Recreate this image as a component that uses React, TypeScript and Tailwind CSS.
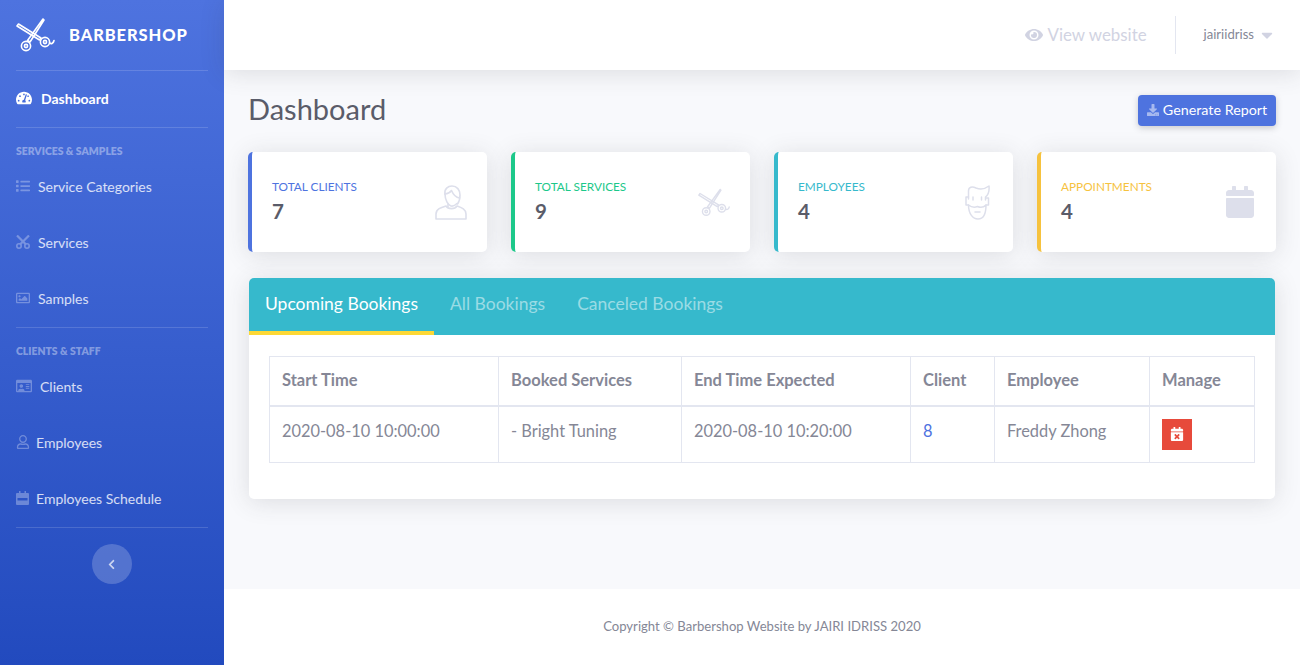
import { FaTachometerAlt, FaList, FaRegImage, FaRegIdCard, FaRegUser, FaChevronLeft, FaEye, FaCaretDown, FaDownload, FaCalendarTimes, FaCalendar } from "react-icons/fa";
import type { ReactNode } from "react";

const Scissors = ({ className, sw = 2 }: { className?: string; sw?: number }) => (
  <svg viewBox="0 0 39 34" className={className} fill="none" stroke="currentColor" strokeWidth={sw} strokeLinejoin="round" strokeLinecap="round">
    <path d="M1 8 L2.500 6 L25 20 L23.500 22 Z" />
    <path d="M27 1 L28 2 L14 24 L11.500 22.500 Z" />
    <circle cx="10" cy="28" r="4.600" />
    <circle cx="10" cy="28" r="1.600" />
    <circle cx="29" cy="24" r="4.600" />
    <circle cx="29" cy="24" r="1.600" />
    <path d="M33.600 25 C35.500 26.500 37.500 25 38 22.500" />
  </svg>
);

const SmallCut = () => (
  <svg viewBox="0 0 14 14" className="h-[14px] w-[14px]" fill="none" stroke="currentColor">
    <path d="M1 0.500 L10 9.500 M13 0.500 L4 9.500" strokeWidth="2.200" />
    <circle cx="3" cy="11" r="2.200" strokeWidth="1.600" />
    <circle cx="11" cy="11" r="2.200" strokeWidth="1.600" />
  </svg>
);

const SolidCalendar = () => (
  <svg viewBox="0 0 13 14" className="h-[14px] w-[13px]" fill="currentColor">
    <path fillRule="evenodd" d="M3 0 H4.500 V2 H8.500 V0 H10 V2 H12 A1 1 0 0 1 13 3 V13 A1 1 0 0 1 12 14 H1 A1 1 0 0 1 0 13 V3 A1 1 0 0 1 1 2 H3 Z M1.500 7 V9.500 H11.500 V7 Z" />
  </svg>
);

const ClientIcon = ({ className }: { className?: string }) => (
  <svg viewBox="0 0 32 35" className={className} fill="none" stroke="currentColor" strokeWidth="1.600" strokeLinecap="round" strokeLinejoin="round">
    <path d="M1 34 V29 C1 24 6 22.500 11 21 C13 24.500 20 24.500 22 21 C26 22.500 31 24 31 29 V34 Z" />
    <path d="M10 9 C9 4 13 1 17 1 C22 1 25 5 25 10 C25 14 24 17 22.500 19" />
    <path d="M10 9 C13 9 15 7.500 16.500 5.500 C18 9 20.500 12.500 24.500 13" />
    <path d="M10 9 C10 15 13 20 16 21 C18 21.500 20 20.500 22 18.500" />
    <path d="M13 19 L13 22" />
  </svg>
);

const BeardIcon = ({ className }: { className?: string }) => (
  <svg viewBox="0 0 25 35" className={className} fill="none" stroke="currentColor" strokeWidth="1.500" strokeLinecap="round" strokeLinejoin="round">
    <path d="M3.500 14 V6 C3.500 2 7 1 11 3 C15 4.500 20 4 24 1 C24.500 6 23 10 20.500 12 V15" />
    <path d="M3.500 12 H1 V20 H3.500 M21 13 H23.500 V20 H21" />
    <path d="M3.500 20 C3.500 29 8 34 13 34 C18 34 21 29 21 20 C19 22 16 23 12.500 21.500 C9 23 6 22 3.500 20 Z" />
    <path d="M8 12 V15 M16.500 12 V15" />
    <path d="M10 27 H15" />
  </svg>
);

const Item = ({ icon, label, gap }: { icon: ReactNode; label: string; gap: string }) => (
  <a className={`flex h-14 items-center pb-[2px] text-[14px] text-white/80 ${gap}`}>
    <span className="flex shrink-0 text-[14px] text-white opacity-30">{icon}</span>
    {label}
  </a>
);

const Heading = ({ children }: { children: string }) => (
  <div className="flex h-[31px] shrink-0 items-start pt-[17px] text-[10.4px] leading-3 font-extrabold whitespace-nowrap text-white/40 uppercase">
    {children}
  </div>
);

const Stat = ({ label, value, border, text, icon }: { label: string; value: string; border: string; text: string; icon: ReactNode }) => (
  <div className={`flex h-[100px] items-center justify-between rounded-[5px] border-l-4 bg-white px-[20px] shadow-[0_3px_24px_rgba(58,59,69,0.15)] ${border}`}>
    <div className="pb-[3px]">
      <div className={`text-[11.8px] leading-[16px] uppercase ${text}`}>{label}</div>
      <div className="mt-[4px] text-[20.500px] leading-6 font-bold text-[#5a5c69]">{value}</div>
    </div>
    <div className="flex w-[32px] justify-center text-[#dddfeb]">{icon}</div>
  </div>
);

const Th = ({ children }: { children: string }) => (
  <th className="border border-b-2 border-[#e3e6f0] px-3 text-left align-middle text-[16.500px] font-bold text-[#858796]">{children}</th>
);
const Td = ({ children, color = "text-[#858796]" }: { children: ReactNode; color?: string }) => (
  <td className={`border border-[#e3e6f0] px-3 pt-[12px] align-top text-[16.400px] leading-6 ${color}`}>{children}</td>
);

export default function App() {
  return (
    <div className="flex h-[665px] w-[1300px] overflow-hidden bg-[#f8f9fc] font-['Lato','Liberation_Sans',sans-serif] text-[#858796]">
      <aside className="flex w-[224px] shrink-0 flex-col bg-gradient-to-b from-[#4e73df] to-[#224abe] px-4">
        <div className="flex h-[71px] shrink-0 items-center border-b border-white/15">
          <Scissors className="h-[34px] w-[39px] text-white" sw={1.600} />
          <span className="ml-[14px] text-[16.500px] font-black tracking-[0.9px] text-white">BARBERSHOP</span>
        </div>
        <a className="flex h-[57px] shrink-0 items-center gap-[9px] border-b border-white/15 pb-[2px] text-[14px] font-bold text-white">
          <FaTachometerAlt className="text-[16px]" />
          Dashboard
        </a>
        <Heading>Services &amp; Samples</Heading>
        <Item icon={<FaList />} label="Service Categories" gap="gap-[8px]" />
        <Item icon={<SmallCut />} label="Services" gap="gap-[8px]" />
        <Item icon={<FaRegImage />} label="Samples" gap="gap-[8px]" />
        <div className="border-t border-white/15" />
        <Heading>Clients &amp; Staff</Heading>
        <Item icon={<FaRegIdCard className="text-[16px]" />} label="Clients" gap="gap-[8px]" />
        <Item icon={<FaRegUser />} label="Employees" gap="gap-[6px]" />
        <Item icon={<SolidCalendar />} label="Employees Schedule" gap="gap-[7px]" />
        <div className="border-t border-white/15" />
        <button className="mx-auto mt-4 flex h-10 w-10 shrink-0 items-center justify-center rounded-full bg-white/20 pr-px text-[11px] text-white/70">
          <FaChevronLeft />
        </button>
      </aside>

      <div className="flex min-w-0 flex-1 flex-col">
        <header className="z-10 flex h-[70px] shrink-0 items-center justify-end bg-white pr-[24px] shadow-[0_3px_24px_rgba(58,59,69,0.15)]">
          <span className="flex items-center gap-[5px] text-[16.900px] text-[#d1d3e2]">
            <FaEye className="text-[18px]" />
            View website
          </span>
          <div className="mx-[28px] h-[38px] w-px bg-[#e3e6f0]" />
          <span className="flex items-center gap-[4px] text-[13.100px] text-[#858796]">
            jairiidriss
            <FaCaretDown className="text-[18px] text-[#d1d3e2]" />
          </span>
        </header>

        <main className="flex-1 px-6 pt-[25px]">
          <div className="mb-[26px] flex h-[31px] items-center justify-between">
            <h1 className="mb-[4px] text-[29px] leading-[32px] font-normal text-[#5a5c69]">Dashboard</h1>
            <button className="flex h-[31px] w-[138px] items-center justify-center gap-[4px] rounded-[4px] bg-[#4e73df] pb-px text-[14.300px] text-white shadow-[0_2px_6px_rgba(58,59,69,0.25)]">
              <FaDownload className="text-[12px] text-white/50" />
              Generate Report
            </button>
          </div>

          <div className="grid grid-cols-4 gap-6">
            <Stat label="Total Clients" value="7" border="border-[#4e73df]" text="text-[#4e73df]" icon={<ClientIcon className="h-[35px] w-[32px]" />} />
            <Stat label="Total Services" value="9" border="border-[#1cc88a]" text="text-[#1cc88a]" icon={<Scissors className="h-[31px] w-[35px]" sw={1.700} />} />
            <Stat label="Employees" value="4" border="border-[#36b9cc]" text="text-[#36b9cc]" icon={<BeardIcon className="h-[35px] w-[25px]" />} />
            <Stat label="Appointments" value="4" border="border-[#f6c23e]" text="text-[#f6c23e]" icon={<FaCalendar className="h-[32px] w-[28px]" />} />
          </div>

          <section className="mx-px mt-[26px] h-[221px] overflow-hidden rounded-[5px] bg-white shadow-[0_3px_24px_rgba(58,59,69,0.15)]">
            <nav className="flex h-[57px] bg-[#36b9cc] text-[17.500px]">
              <a className="flex w-[185px] items-center justify-center border-b-4 border-[#fdd835] text-white">Upcoming Bookings</a>
              <a className="flex items-center border-b-4 border-transparent pl-4 text-white/50">All Bookings</a>
              <a className="flex items-center border-b-4 border-transparent pl-8 text-white/50">Canceled Bookings</a>
            </nav>
            <div className="px-5 pt-[21px]">
              <table className="w-[985px] table-fixed border-collapse">
                <colgroup>
                  <col className="w-[229px]" />
                  <col className="w-[183px]" />
                  <col className="w-[229px]" />
                  <col className="w-[84px]" />
                  <col className="w-[155px]" />
                  <col className="w-[105px]" />
                </colgroup>
                <thead>
                  <tr className="h-[49px]">
                    <Th>Start Time</Th>
                    <Th>Booked Services</Th>
                    <Th>End Time Expected</Th>
                    <Th>Client</Th>
                    <Th>Employee</Th>
                    <Th>Manage</Th>
                  </tr>
                </thead>
                <tbody>
                  <tr className="h-[57px]">
                    <Td>2020-08-10 10:00:00</Td>
                    <Td>- Bright Tuning</Td>
                    <Td>2020-08-10 10:20:00</Td>
                    <Td color="text-[#4e73df]">8</Td>
                    <Td>Freddy Zhong</Td>
                    <Td>
                      <span className="flex h-[31px] w-[30px] items-center justify-center bg-[#e74a3b] text-[14px] text-white">
                        <FaCalendarTimes />
                      </span>
                    </Td>
                  </tr>
                </tbody>
              </table>
            </div>
          </section>
        </main>

        <footer className="flex h-[76px] shrink-0 items-center justify-center bg-white text-[13.100px] text-[#858796]">
          Copyright © Barbershop Website by JAIRI IDRISS 2020
        </footer>
      </div>
    </div>
  );
}
